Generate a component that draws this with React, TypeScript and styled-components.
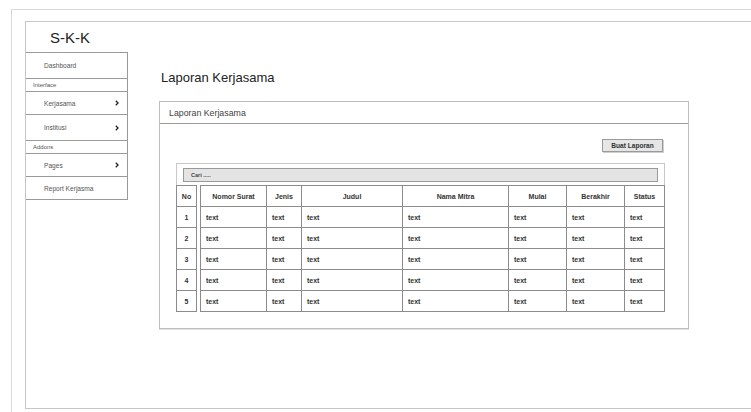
import React from "react";
import styled, { createGlobalStyle } from "styled-components";

const GlobalStyle = createGlobalStyle`
  html, body {
    margin: 0;
    padding: 0;
    background: #ffffff;
    overflow: hidden;
  }
  body {
    font-family: "Liberation Sans", Arial, sans-serif;
    color: #333;
  }
`;

const Page = styled.div`
  padding: 9px 0 0 11px;
  height: 100vh;
  box-sizing: border-box;
`;

const Window = styled.div`
  border-top: 1px solid #d9d9d9;
  border-left: 1px solid #d9d9d9;
  padding: 11px 0 0 13px;
  height: 100%;
  box-sizing: border-box;
`;

const Viewport = styled.div`
  display: flex;
  height: 388px;
  box-sizing: border-box;
  border: 1px solid #c6c6c6;
  border-right: none;
`;

const Sidebar = styled.aside`
  width: 102px;
  flex-shrink: 0;
`;

const Brand = styled.div`
  height: 30px;
  display: flex;
  align-items: center;
  padding-left: 24px;
  font-size: 15px;
  color: #222;
`;

const Menu = styled.nav`
  border-top: 1px solid #9a9a9a;
  border-right: 1px solid #9a9a9a;
`;

const NavItem = styled.div<{ $h: number }>`
  height: ${(p) => p.$h}px;
  border-bottom: 1px solid #9a9a9a;
  display: flex;
  align-items: center;
  justify-content: space-between;
  padding: 0 8px 0 18px;
  font-size: 6.6px;
  color: #555;
`;

const NavLabel = styled.div<{ $h: number }>`
  height: ${(p) => p.$h}px;
  border-bottom: 1px solid #9a9a9a;
  display: flex;
  align-items: center;
  padding-left: 7px;
  font-size: 6px;
  color: #555;
`;

const Chevron = () => (
  <svg width="4" height="6" viewBox="0 0 4 6">
    <polyline points="0.8,0.8 3,3 0.8,5.2" fill="none" stroke="#222" strokeWidth="1.3" />
  </svg>
);

const Main = styled.main`
  flex: 1;
  min-width: 0;
  padding: 48px 0 0 31px;
`;

const Title = styled.h1`
  margin: 0 0 15px 2px;
  font-size: 13px;
  line-height: 16px;
  font-weight: normal;
  color: #222;
`;

const Panel = styled.section`
  width: 530px;
  box-sizing: border-box;
  border: 1px solid #bdbdbd;
  box-shadow: 0 1px 0 #e2e2e2;
`;

const PanelHeader = styled.div`
  height: 21px;
  border-bottom: 1px solid #9a9a9a;
  display: flex;
  align-items: center;
  padding-left: 9px;
  font-size: 8.8px;
  color: #444;
`;

const PanelBody = styled.div`
  padding: 15px 23px 16px 16px;
  display: flex;
  flex-direction: column;
`;

const Toolbar = styled.div`
  display: flex;
  justify-content: flex-end;
  padding-right: 2px;
  margin-bottom: 11px;
`;

const Button = styled.button`
  width: 61px;
  height: 13px;
  padding: 0;
  border: 1px solid #9a9a9a;
  background: #e6e6e6;
  box-shadow: 1px 1px 0 #cfcfcf;
  font-family: "Liberation Sans", Arial, sans-serif;
  font-size: 6.6px;
  font-weight: bold;
  color: #333;
`;

const TableFrame = styled.div`
  border: 1px solid #c8c8c8;
  border-bottom: none;
`;

const SearchRow = styled.div`
  padding: 4px 6px 3px;
`;

const Search = styled.div`
  height: 14px;
  box-sizing: border-box;
  border: 1px solid #9a9a9a;
  background: #e4e4e4;
  display: flex;
  align-items: center;
  padding-left: 7px;
  font-size: 5.5px;
  font-weight: bold;
  color: #444;
`;

const Tables = styled.div`
  display: flex;
  justify-content: space-between;
  margin: 0 -1px;
`;

const Grid = styled.table<{ $w: number }>`
  width: ${(p) => p.$w}px;
  border-collapse: collapse;
  table-layout: fixed;
  font-size: 7px;
  font-weight: bold;
  color: #333;

  th, td {
    height: 20px;
    padding: 0 5px;
    border: 1px solid #8c8c8c;
    white-space: nowrap;
    overflow: hidden;
  }
  th {
    text-align: center;
  }
  td {
    text-align: left;
  }
`;

const NumberCell = styled.td`
  && {
    text-align: center;
    padding: 0;
  }
`;

const NumberHead = styled.th`
  && {
    padding: 0;
  }
`;

const columns = [
  { label: "Nomor Surat", width: 66 },
  { label: "Jenis", width: 35 },
  { label: "Judul", width: 101 },
  { label: "Nama Mitra", width: 106 },
  { label: "Mulai", width: 58 },
  { label: "Berakhir", width: 58 },
  { label: "Status", width: 40 },
];

const rows = [1, 2, 3, 4, 5];

export default function App() {
  return (
    <>
      <GlobalStyle />
      <Page>
        <Window>
          <Viewport>
            <Sidebar>
              <Brand>S-K-K</Brand>
              <Menu>
                <NavItem $h={25}>Dashboard</NavItem>
                <NavLabel $h={12}>Interface</NavLabel>
                <NavItem $h={22}>
                  Kerjasama <Chevron />
                </NavItem>
                <NavItem $h={25}>
                  Institusi <Chevron />
                </NavItem>
                <NavLabel $h={12}>Addons</NavLabel>
                <NavItem $h={22}>
                  Pages <Chevron />
                </NavItem>
                <NavItem $h={22}>Report Kerjasma</NavItem>
              </Menu>
            </Sidebar>
            <Main>
              <Title>Laporan Kerjasama</Title>
              <Panel>
                <PanelHeader>Laporan Kerjasama</PanelHeader>
                <PanelBody>
                  <Toolbar>
                    <Button>Buat Laporan</Button>
                  </Toolbar>
                  <TableFrame>
                    <SearchRow>
                      <Search>Cari .....</Search>
                    </SearchRow>
                    <Tables>
                      <Grid $w={21}>
                        <thead>
                          <tr>
                            <NumberHead>No</NumberHead>
                          </tr>
                        </thead>
                        <tbody>
                          {rows.map((n) => (
                            <tr key={n}>
                              <NumberCell>{n}</NumberCell>
                            </tr>
                          ))}
                        </tbody>
                      </Grid>
                      <Grid $w={464}>
                        <colgroup>
                          {columns.map((c) => (
                            <col key={c.label} style={{ width: c.width }} />
                          ))}
                        </colgroup>
                        <thead>
                          <tr>
                            {columns.map((c) => (
                              <th key={c.label}>{c.label}</th>
                            ))}
                          </tr>
                        </thead>
                        <tbody>
                          {rows.map((n) => (
                            <tr key={n}>
                              {columns.map((c) => (
                                <td key={c.label}>text</td>
                              ))}
                            </tr>
                          ))}
                        </tbody>
                      </Grid>
                    </Tables>
                  </TableFrame>
                </PanelBody>
              </Panel>
            </Main>
          </Viewport>
        </Window>
      </Page>
    </>
  );
}
